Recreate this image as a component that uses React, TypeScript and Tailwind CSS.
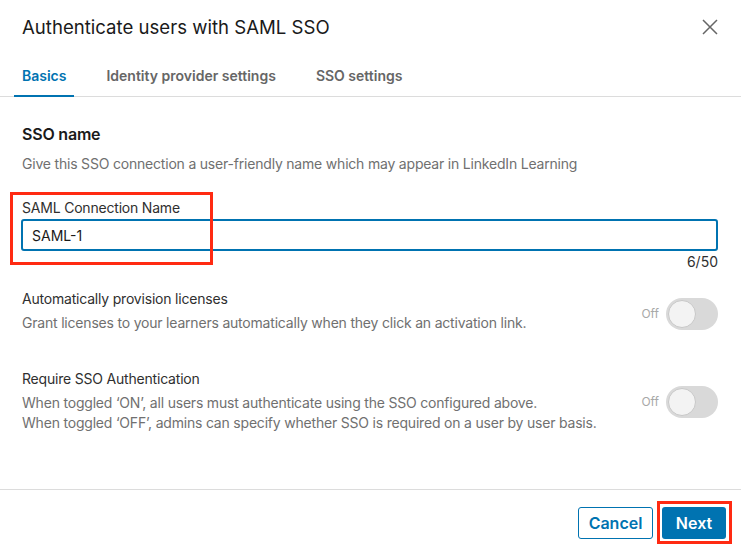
import { useState } from 'react'

const FONT = { fontFamily: 'Inter, "Noto Sans", Arial, sans-serif' }

type Tab = 'basics' | 'idp' | 'sso'

const TABS: { id: Tab; label: string }[] = [
  { id: 'basics', label: 'Basics' },
  { id: 'idp', label: 'Identity provider settings' },
  { id: 'sso', label: 'SSO settings' },
]

function Toggle({ on, onChange, offset }: { on: boolean; onChange: (v: boolean) => void; offset: string }) {
  return (
    <div className={`flex items-center gap-[7px] shrink-0 ${offset}`}>
      <span className="text-[12px] text-[#a8a8a8]">{on ? 'On' : 'Off'}</span>
      <button
        type="button"
        onClick={() => onChange(!on)}
        className={`relative w-[52px] h-[32px] rounded-full ${on ? 'bg-[#0073b1]' : 'bg-[#d9d9d9]'}`}
      >
        <span
          className={`absolute top-[2px] h-[28px] w-[28px] rounded-full bg-[#f3f3f3] border border-[#c8c8c8] ${on ? 'left-[22px]' : 'left-[2px]'}`}
        />
      </button>
    </div>
  )
}

function SettingRow({
  title,
  lines,
  on,
  onChange,
  offset,
}: {
  title: string
  lines: string[]
  on: boolean
  onChange: (v: boolean) => void
  offset: string
}) {
  return (
    <div className="flex items-center justify-between">
      <div className="tracking-[-0.2px]">
        <p className="text-[14px] leading-5 text-[#2f2f2f]">{title}</p>
        <div className="mt-1">
          {lines.map((l) => (
            <p key={l} className="text-[14px] leading-5 text-[#707070]">
              {l}
            </p>
          ))}
        </div>
      </div>
      <Toggle on={on} onChange={onChange} offset={offset} />
    </div>
  )
}

export default function App() {
  const [tab, setTab] = useState<Tab>('basics')
  const [name, setName] = useState('SAML-1')
  const [provision, setProvision] = useState(false)
  const [requireSso, setRequireSso] = useState(false)

  return (
    <div style={FONT} className="relative w-[741px] h-[554px] bg-white flex flex-col overflow-hidden">
      {/* header */}
      <div className="flex items-center justify-between pl-[22px] pr-[23px] pt-[15px]">
        <h1 className="text-[18.6px] leading-6 text-[#1a1a1a]">Authenticate users with SAML SSO</h1>
        <button type="button" className="text-[#666]">
          <svg width="16" height="16" viewBox="0 0 16 16" fill="none" stroke="currentColor" strokeWidth="1.5">
            <path d="M1 1l14 14M15 1L1 15" />
          </svg>
        </button>
      </div>

      {/* tabs */}
      <div className="mt-[17px] flex gap-6 pl-[14px] border-b border-[#dcdcdc]">
        {TABS.map((t) => (
          <button
            key={t.id}
            type="button"
            onClick={() => setTab(t.id)}
            className={`-mb-px px-2 pt-[10px] pb-[9px] text-[14px] leading-5 font-semibold border-b-2 ${
              tab === t.id ? 'text-[#0073b1] border-[#0073b1]' : 'text-[#666] border-transparent'
            }`}
          >
            {t.label}
          </button>
        ))}
      </div>

      {/* body */}
      <div className="flex-1 pl-[22px] pr-[23px]">
        <h2 className="mt-[25px] text-[16px] leading-6 font-semibold text-[#1a1a1a] tracking-[-0.2px]">SSO name</h2>
        <p className="mt-[8px] text-[14px] leading-5 text-[#707070] tracking-[-0.2px]">
          Give this SSO connection a user-friendly name which may appear in LinkedIn Learning
        </p>

        <label className="block mt-[24px] text-[14px] leading-5 text-[#2f2f2f] tracking-[-0.2px]">
          SAML Connection Name
        </label>
        <input
          value={name}
          maxLength={50}
          onChange={(e) => setName(e.target.value)}
          className="mt-px -ml-px w-[calc(100%+1px)] h-[32px] px-[9px] text-[14px] text-[#1a1a1a] border-2 border-[#0073b1] rounded-[3px] outline-none"
        />
        <p className="mt-[2px] text-right text-[14px] leading-[18px] text-[#2f2f2f]">{name.length}/50</p>

        <div className="mt-[18px]">
          <SettingRow
            title="Automatically provision licenses"
            lines={['Grant licenses to your learners automatically when they click an activation link.']}
            on={provision}
            onChange={setProvision}
            offset="mt-[6px]"
          />
        </div>
        <div className="mt-[36px]">
          <SettingRow
            title="Require SSO Authentication"
            lines={[
              'When toggled ‘ON’, all users must authenticate using the SSO configured above.',
              'When toggled ‘OFF’, admins can specify whether SSO is required on a user by user basis.',
            ]}
            on={requireSso}
            onChange={setRequireSso}
            offset="mt-[2px]"
          />
        </div>
      </div>

      {/* footer */}
      <div className="h-[65px] border-t border-[#dcdcdc] flex items-start justify-end gap-[9px] pr-[15px] pt-[17px]">
        <button
          type="button"
          className="h-[32px] w-[75px] rounded-[3px] border border-[#0073b1] text-[#0073b1] text-[16px] font-semibold"
        >
          Cancel
        </button>
        <button type="button" className="h-[32px] w-[64px] rounded-[3px] bg-[#0073b1] text-white text-[16px] font-semibold">
          Next
        </button>
      </div>

      {/* annotation boxes */}
      <div className="absolute left-[10px] top-[192px] w-[203px] h-[73px] border-[3px] border-[#ff2a12] pointer-events-none" />
      <div className="absolute left-[657px] top-[501px] w-[75px] h-[43px] border-[3px] border-[#ff2a12] pointer-events-none" />
    </div>
  )
}
